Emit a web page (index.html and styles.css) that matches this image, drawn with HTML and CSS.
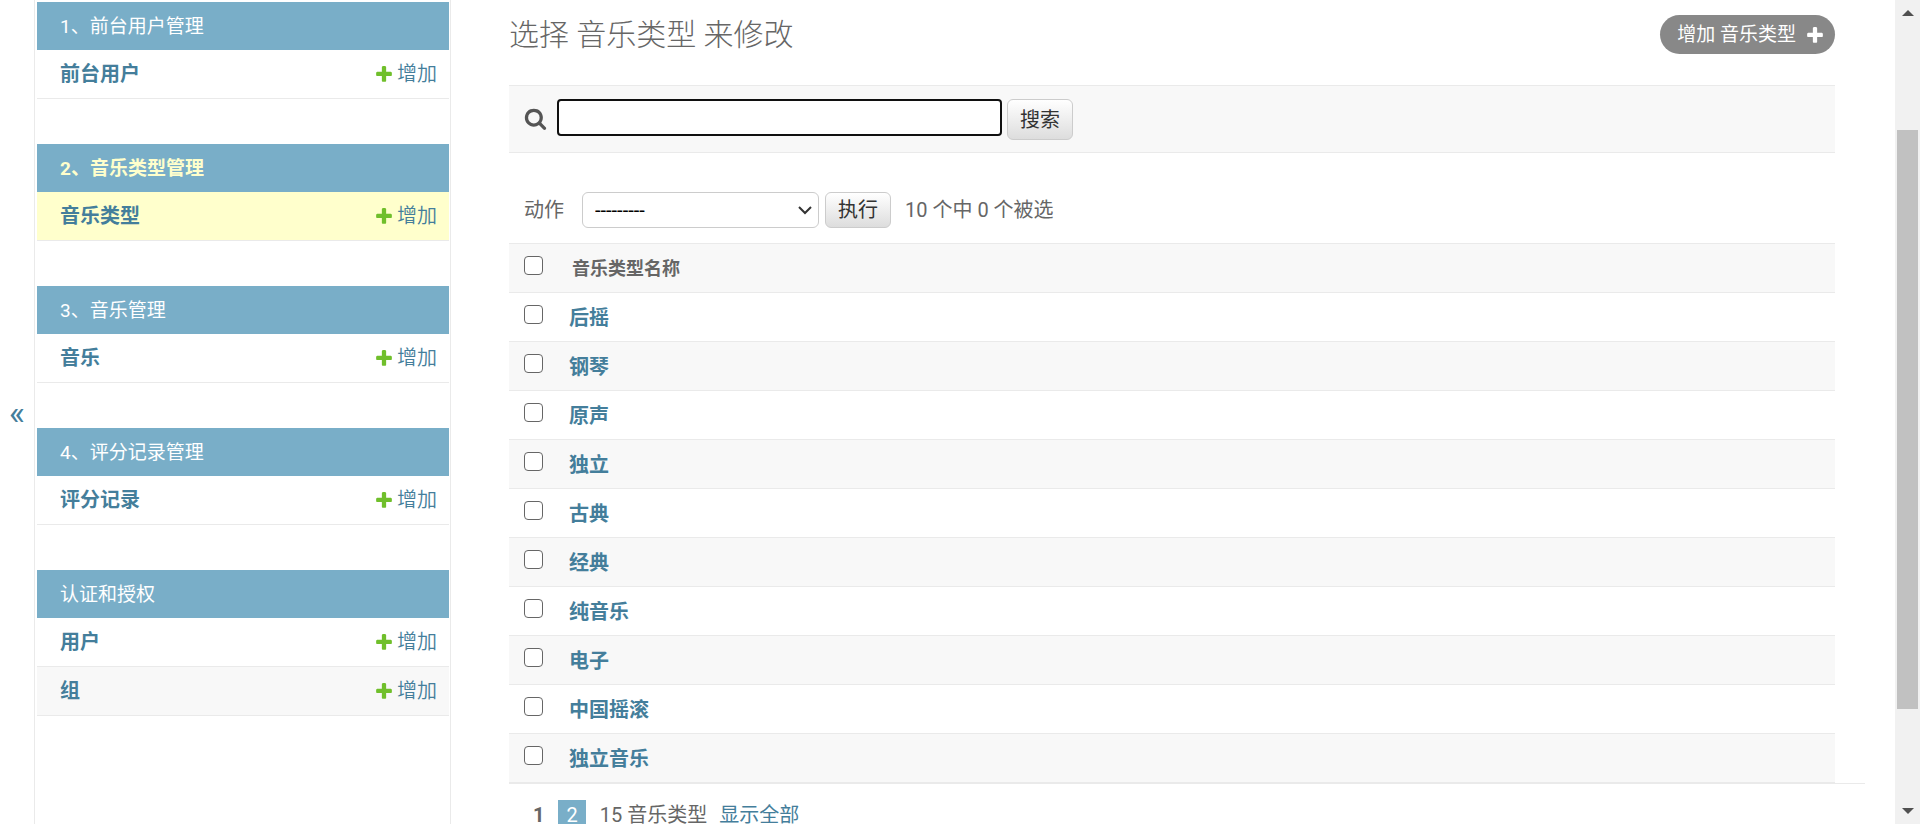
FILE: index.html
```html
<!DOCTYPE html>
<html lang="zh-CN">
<head>
<meta charset="utf-8">
<title>选择 音乐类型 来修改</title>
<link rel="stylesheet" href="styles.css">
</head>
<body>
<svg class="defs" aria-hidden="true">
  <symbol id="plus" viewBox="0 0 1792 1792"><path d="M1600 796v192q0 40-28 68t-68 28h-416v416q0 40-28 68t-68 28H800q-40 0-68-28t-28-68v-416H288q-40 0-68-28t-28-68V796q0-40 28-68t68-28h416V284q0-40 28-68t68-28h192q40 0 68 28t28 68v416h416q40 0 68 28t28 68z"/></symbol>
</svg>
<div class="page">
  <button class="toggle" aria-label="切换导航">«</button>
  <nav class="sidebar">
    <section class="module">
      <h2><a href="#">1、前台用户管理</a></h2>
      <div class="model"><a class="name" href="#">前台用户</a><a class="add" href="#"><svg><use href="#plus"/></svg>增加</a></div>
    </section>
    <section class="module current">
      <h2><a href="#">2、音乐类型管理</a></h2>
      <div class="model"><a class="name" href="#">音乐类型</a><a class="add" href="#"><svg><use href="#plus"/></svg>增加</a></div>
    </section>
    <section class="module">
      <h2><a href="#">3、音乐管理</a></h2>
      <div class="model"><a class="name" href="#">音乐</a><a class="add" href="#"><svg><use href="#plus"/></svg>增加</a></div>
    </section>
    <section class="module">
      <h2><a href="#">4、评分记录管理</a></h2>
      <div class="model"><a class="name" href="#">评分记录</a><a class="add" href="#"><svg><use href="#plus"/></svg>增加</a></div>
    </section>
    <section class="module">
      <h2><a href="#">认证和授权</a></h2>
      <div class="model"><a class="name" href="#">用户</a><a class="add" href="#"><svg><use href="#plus"/></svg>增加</a></div>
      <div class="model"><a class="name" href="#">组</a><a class="add" href="#"><svg><use href="#plus"/></svg>增加</a></div>
    </section>
  </nav>
  <main class="content">
    <header class="heading">
      <h1>选择 音乐类型 来修改</h1>
      <a class="addlink" href="#">增加 音乐类型<svg><use href="#plus"/></svg></a>
    </header>
    <form class="search">
      <label for="q"><svg viewBox="0 0 1792 1792" role="img" aria-label="搜索"><path d="M1216 832q0-185-131.500-316.500t-316.500-131.500-316.500 131.500-131.500 316.500 131.500 316.500 316.500 131.500 316.500-131.500 131.500-316.500zm512 832q0 52-38 90t-90 38q-54 0-90-38l-343-342q-179 124-399 124-143 0-273.500-55.500t-225-150-150-225-55.500-273.500 55.500-273.500 150-225 225-150 273.500-55.500 273.500 55.500 225 150 150 225 55.500 273.500q0 220-124 399l343 343q37 37 37 90z"/></svg></label>
      <input id="q" type="text">
      <button class="btn" type="button">搜索</button>
    </form>
    <div class="actions">
      <label for="action">动作</label>
      <span class="pick">
        <select id="action"><option>---------</option></select>
        <svg viewBox="0 0 14 9" aria-hidden="true"><path d="M1 1l6 6 6-6"/></svg>
      </span>
      <button class="btn" type="button">执行</button>
      <span class="counter">10 个中 0 个被选</span>
    </div>
    <table class="results">
      <thead><tr><th class="check"><input type="checkbox" aria-label="全选"></th><th>音乐类型名称</th></tr></thead>
      <tbody>
        <tr><td class="check"><input type="checkbox" aria-label="后摇"></td><td><a href="#">后摇</a></td></tr>
        <tr><td class="check"><input type="checkbox" aria-label="钢琴"></td><td><a href="#">钢琴</a></td></tr>
        <tr><td class="check"><input type="checkbox" aria-label="原声"></td><td><a href="#">原声</a></td></tr>
        <tr><td class="check"><input type="checkbox" aria-label="独立"></td><td><a href="#">独立</a></td></tr>
        <tr><td class="check"><input type="checkbox" aria-label="古典"></td><td><a href="#">古典</a></td></tr>
        <tr><td class="check"><input type="checkbox" aria-label="经典"></td><td><a href="#">经典</a></td></tr>
        <tr><td class="check"><input type="checkbox" aria-label="纯音乐"></td><td><a href="#">纯音乐</a></td></tr>
        <tr><td class="check"><input type="checkbox" aria-label="电子"></td><td><a href="#">电子</a></td></tr>
        <tr><td class="check"><input type="checkbox" aria-label="中国摇滚"></td><td><a href="#">中国摇滚</a></td></tr>
        <tr><td class="check"><input type="checkbox" aria-label="独立音乐"></td><td><a href="#">独立音乐</a></td></tr>
      </tbody>
    </table>
    <div class="paginator">
      <span class="this-page">1</span>
      <a class="page-link" href="#">2</a>
      <span class="total">15 音乐类型</span>
      <a href="#">显示全部</a>
    </div>
  </main>
  <div class="scrollbar" aria-hidden="true">
    <svg viewBox="0 0 12 6"><path d="M0 6l6-6 6 6z"/></svg>
    <div class="thumb"></div>
    <svg viewBox="0 0 12 6"><path d="M0 0l6 6 6-6z"/></svg>
  </div>
</div>
</body>
</html>
```

FILE: styles.css
```css
* { box-sizing: border-box; }

body {
  margin: 0;
  background: #fff;
  color: #666;
  font-family: Roboto, "Noto Sans CJK SC", sans-serif;
  font-size: 20px;
  font-weight: 300;
  line-height: 24px;
}

a { color: #447e9b; text-decoration: none; }
svg { display: block; fill: currentColor; }
button, input, select { margin: 0; font: inherit; }
.defs { display: none; }

.page { display: flex; height: 100vh; overflow: hidden; }

.toggle {
  flex: 0 0 35px;
  padding: 0;
  border: 0;
  border-right: 1px solid #eaeaea;
  background: #fff;
  color: #447e9b;
  font-size: 34px;
  font-weight: 400;
  text-align: center;
}

/* Sidebar */
.sidebar {
  flex: 0 0 416px;
  display: flex;
  flex-direction: column;
  gap: 45px;
  padding: 2px 1px 0 2px;
  border-right: 1px solid #eaeaea;
}
.module h2 {
  margin: 0;
  padding: 13px 23px 11px;
  background: #79aec8;
  font-size: 19px;
  font-weight: 400;
  line-height: 24px;
}
.module h2 a { color: #fff; }
.model {
  display: flex;
  justify-content: space-between;
  padding: 12px 12px 12px 23px;
  border-bottom: 1px solid #eaeaea;
}
.model + .model { background: #f8f8f8; }
.name { font-weight: 700; }
.add { display: flex; align-items: center; gap: 3px; font-weight: 350; }
.add svg, .addlink svg { width: 20px; height: 20px; }
.add svg { fill: #70bf2b; }
.current h2 { font-weight: 700; }
.current h2 a { color: #ffc; }
.current .model { background: #ffc; }

/* Change list */
.content { flex: 1; min-width: 0; padding: 15px 30px 0 58px; }
.heading {
  display: flex;
  justify-content: space-between;
  align-items: flex-start;
  margin: 0 30px 31px 0;
}
h1 { margin: 0; font-size: 30px; font-weight: 300; line-height: 39px; }
.addlink {
  display: flex;
  align-items: center;
  gap: 9px;
  height: 39px;
  padding: 0 10px 0 17px;
  border-radius: 20px;
  background: #888;
  color: #fff;
  font-size: 19px;
  font-weight: 400;
}

.search {
  display: flex;
  align-items: flex-start;
  margin-right: 30px;
  padding: 13px 15px 12px;
  border: solid #eaeaea;
  border-width: 1px 0;
  background: #f8f8f8;
}
.search label { padding: 8px 10px 0 0; color: #555; }
.search label svg { width: 23px; height: 23px; }
.search input {
  width: 445px;
  height: 37px;
  margin-right: 5px;
  padding: 2px 8px;
  border: 2px solid #101010;
  border-radius: 4px;
  background: #fff;
  outline: 0;
}
.btn {
  width: 66px;
  height: 41px;
  padding: 0;
  border: 1px solid #ccc;
  border-radius: 6px;
  background: linear-gradient(#fff, #ddd);
  color: #333;
  font-weight: 400;
}

.actions {
  display: flex;
  align-items: center;
  margin-right: 30px;
  padding: 39px 15px 15px;
  font-weight: 400;
}
.actions label { margin-right: 18px; }
.pick { position: relative; width: 237px; margin-right: 6px; }
.pick select {
  display: block;
  width: 100%;
  height: 36px;
  padding: 0 12px;
  border: 1px solid #ccc;
  border-radius: 6px;
  background: #fff;
  color: #000;
  appearance: none;
}
.pick svg {
  position: absolute;
  top: 14px;
  right: 7px;
  width: 14px;
  height: 9px;
  fill: none;
  stroke: #333;
  stroke-width: 2;
  pointer-events: none;
}
.actions .btn { height: 36px; }
.counter { margin-left: 14px; }

.results {
  width: calc(100% - 30px);
  border-collapse: separate;
  border-spacing: 0;
}
.results th, .results td {
  padding: 13px 11px 11px;
  border-bottom: 1px solid #eaeaea;
  text-align: left;
  vertical-align: top;
}
.results th {
  padding-left: 14px;
  border-top: 1px solid #eaeaea;
  background: #f8f8f8;
  font-size: 18px;
}
.results .check { width: 49px; padding: 12px 0 0 15px; }
.results tbody tr:nth-child(even) { background: #f8f8f8; }
.results td a { font-weight: 700; }
.check input {
  display: block;
  width: 19px;
  height: 19px;
  border: 1px solid #666;
  border-radius: 4px;
  background: #fff;
  appearance: none;
}
.check input:checked { background: #447e9b; }

.paginator {
  display: flex;
  padding: 16px 15px;
  border-top: 1px solid #eaeaea;
  font-weight: 400;
  line-height: 30px;
}
.this-page { padding: 0 9px; font-weight: 700; }
.page-link {
  margin: 0 14px 0 5px;
  padding: 0 8px;
  background: #79aec8;
  color: #fff;
}
.total { margin-right: 12px; }

/* Scroll track */
.scrollbar {
  flex: 0 0 25px;
  display: flex;
  flex-direction: column;
  align-items: center;
  padding: 10px 2px;
  background: #f1f1f1;
  color: #505050;
}
.scrollbar svg { flex: none; width: 12px; height: 6px; }
.thumb { width: 21px; height: 72%; margin: 114px 0 auto; background: #c1c1c1; }
```
